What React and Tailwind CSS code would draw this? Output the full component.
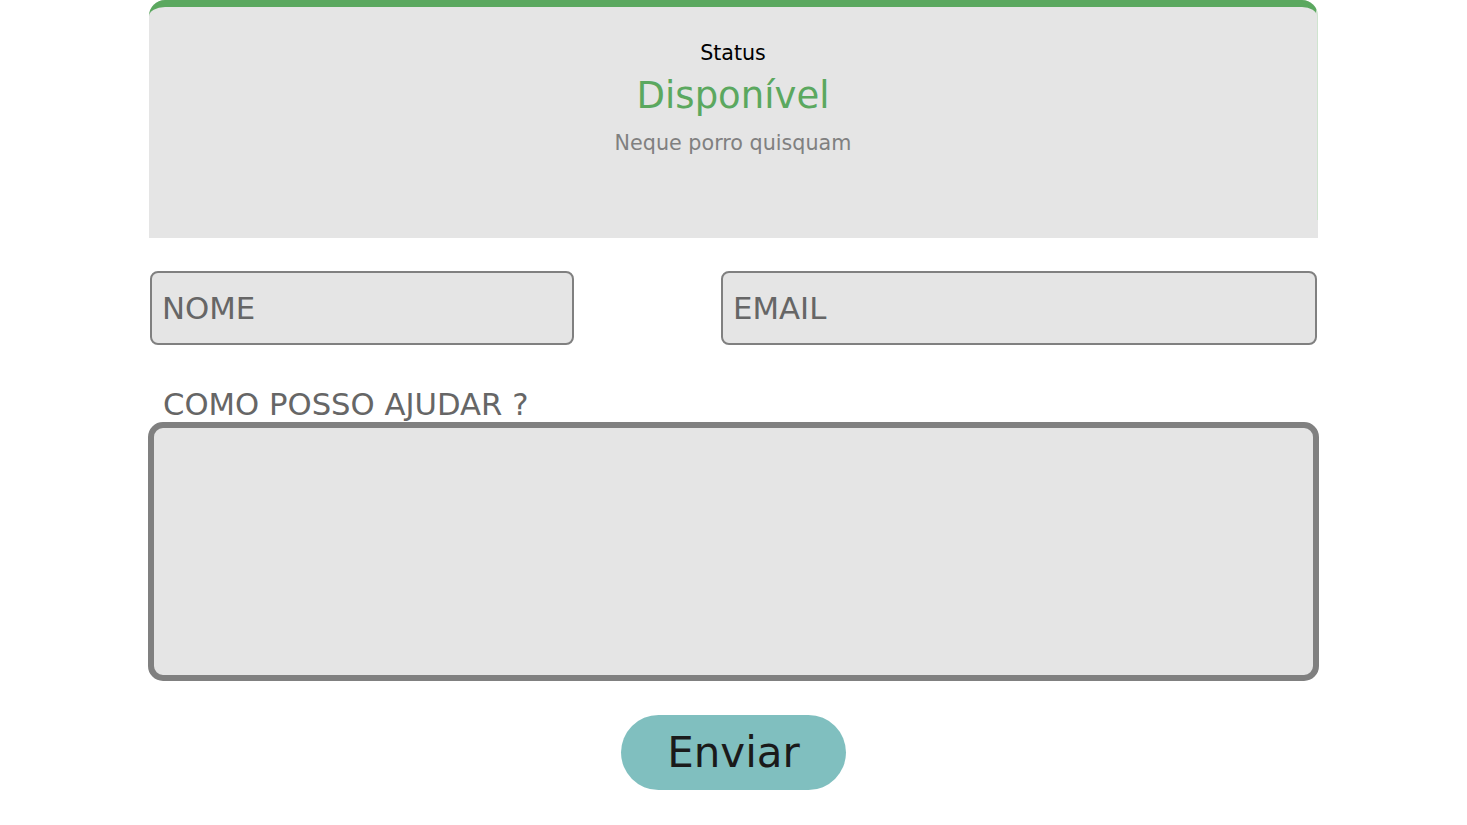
import React from 'react';

const font = { fontFamily: '"DejaVu Sans", Verdana, sans-serif' };

export default function App() {
  return (
    <div className="min-h-screen bg-white" style={font}>
      <div className="mx-auto w-[1169px]">
        {/* Carte de statut */}
        <div className="h-[238px] rounded-t-[16px] bg-[#e5e5e5]">
          <div className="h-[220px] rounded-t-[16px] border-t-[7px] border-r border-t-[#5ba85f] border-r-[#cfe4cf] pt-[34px] text-center">
            <div className="text-[20.6px] leading-[24px] text-black">Status</div>
            <div className="mt-[9px] text-[37px] leading-[43px] text-[#5ba85f]">Disponível</div>
            <div className="mt-[14px] text-[20.7px] leading-[24px] text-[#808080]">Neque porro quisquam</div>
          </div>
        </div>

        {/* Formulaire */}
        <form className="pt-[33px]">
          <div className="flex justify-between">
            <input
              type="text"
              placeholder="NOME"
              className="ml-px h-[74px] w-[424px] rounded-[8px] border-2 border-[#808080] bg-[#e5e5e5] px-[10px] text-[30.8px] text-[#666] outline-none placeholder:text-[#666]"
            />
            <input
              type="email"
              placeholder="EMAIL"
              className="mr-px h-[74px] w-[596px] rounded-[8px] border-2 border-[#808080] bg-[#e5e5e5] px-[10px] text-[30.8px] text-[#666] outline-none placeholder:text-[#666]"
            />
          </div>

          <label className="mt-[41px] block pl-[14px] pt-px text-[30.7px] leading-[35px] text-[#666]">COMO POSSO AJUDAR ?</label>
          <textarea className="-mx-px block h-[259px] w-[1171px] resize-none rounded-[15px] border-[6px] border-[#808080] bg-[#e5e5e5] outline-none" />

          <div className="flex justify-center pt-[34px]">
            <button type="button" className="h-[75px] w-[225px] rounded-full bg-[#80bfbf] text-[42px] text-[#1a1a1a]">
              Enviar
            </button>
          </div>
        </form>
      </div>
    </div>
  );
}
